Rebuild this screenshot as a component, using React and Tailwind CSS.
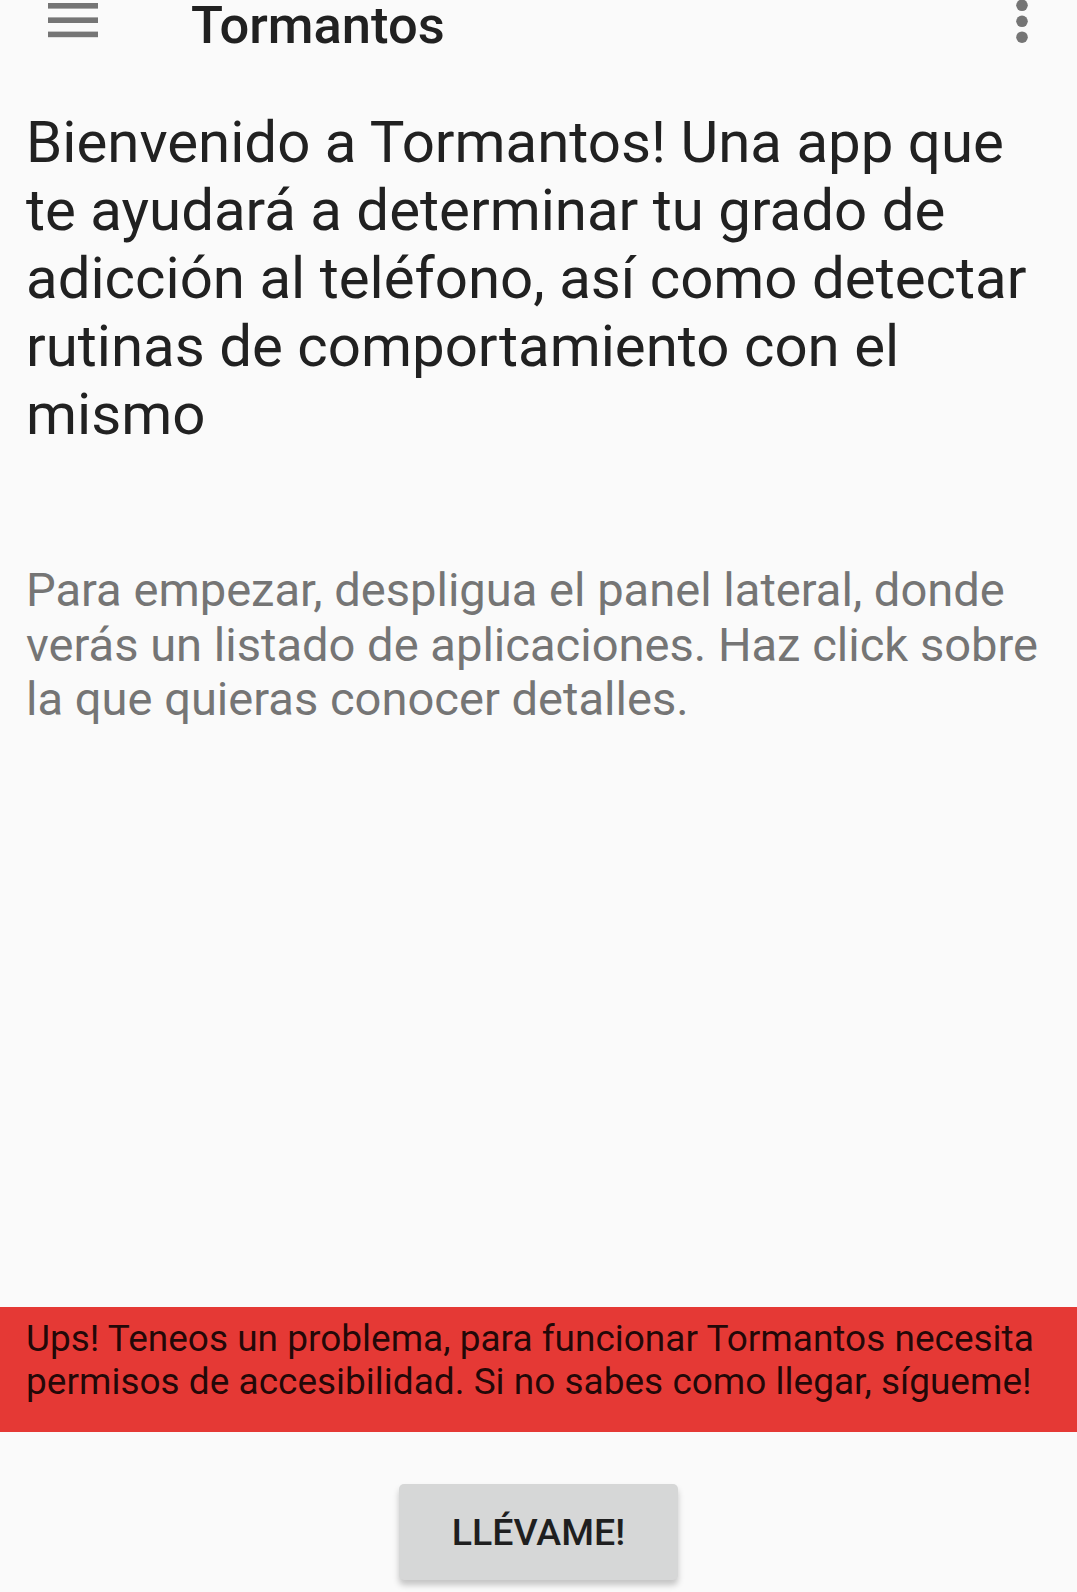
function MenuIcon() {
  return (
    <svg width="50" height="35" viewBox="0 0 50 35" className="block">
      <rect x="0" y="0" width="50" height="5.6" fill="#757575" />
      <rect x="0" y="14.4" width="50" height="5.6" fill="#757575" />
      <rect x="0" y="28.6" width="50" height="5.6" fill="#757575" />
    </svg>
  )
}

function MoreIcon() {
  return (
    <svg width="12" height="44" viewBox="0 0 12 44" className="block overflow-visible">
      <circle cx="6" cy="5.3" r="5.8" fill="#757575" />
      <circle cx="6" cy="21.3" r="5.8" fill="#757575" />
      <circle cx="6" cy="37.2" r="5.8" fill="#757575" />
    </svg>
  )
}

export default function App() {
  return (
    <div
      className="flex flex-col h-[1592px] w-full bg-[#fafafa] overflow-hidden"
      style={{ fontFamily: 'Roboto, "Noto Sans", sans-serif' }}
    >
      {/* Toolbar (scrolled partly off screen) */}
      <div className="flex items-start pl-[48px] pr-[49px] flex-shrink-0">
        <div className="pt-[3px]">
          <MenuIcon />
        </div>
        <h1 className="ml-[93px] text-[52.5px] leading-[50px] font-medium text-[#212121]">
          Tormantos
        </h1>
        <div className="ml-auto">
          <MoreIcon />
        </div>
      </div>

      {/* Content */}
      <div className="flex-1 px-[26px]">
        <p className="mt-[58px] text-[58.2px] leading-[68px] text-[#212121]">
          Bienvenido a Tormantos! Una app que te ayudará a determinar tu grado de adicción al teléfono, así como detectar rutinas de comportamiento con el mismo
        </p>
        <p className="mt-[115px] text-[47.1px] leading-[54.5px] text-[#757575]">
          Para empezar, despligua el panel lateral, donde verás un listado de aplicaciones. Haz click sobre la que quieras conocer detalles.
        </p>
      </div>

      {/* Warning banner */}
      <div className="bg-[#e53935] h-[125px] px-[26px] pt-[10px] flex-shrink-0">
        <p className="text-[37px] leading-[43px] text-black/85">
          Ups! Teneos un problema, para funcionar Tormantos necesita permisos de accesibilidad. Si no sabes como llegar, sígueme!
        </p>
      </div>

      {/* Action */}
      <div className="flex justify-center pt-[52px] pb-[12px] flex-shrink-0">
        <button className="w-[279px] h-[96px] rounded-[5px] bg-[#d6d7d7] shadow-[0_5px_6px_rgba(0,0,0,0.22)] text-[37.5px] font-medium text-[#1f1f1f]">
          LLÉVAME!
        </button>
      </div>
    </div>
  )
}
